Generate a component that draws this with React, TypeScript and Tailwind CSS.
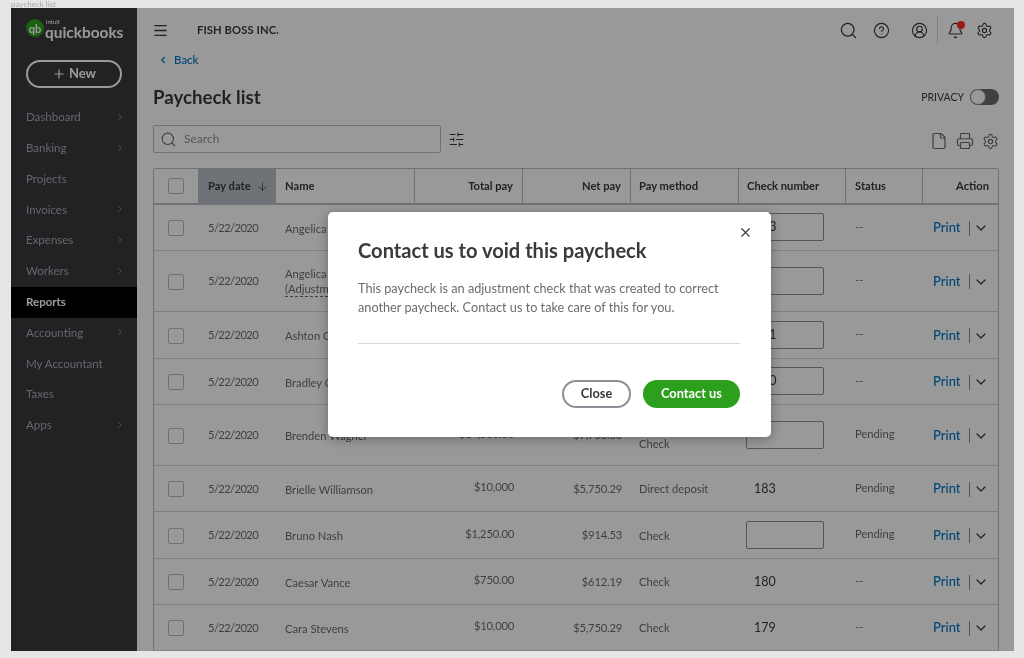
import {
  ArrowDown,
  Bell,
  ChevronDown,
  ChevronLeft,
  ChevronRight,
  CircleHelp,
  CircleUserRound,
  File,
  Menu,
  Plus,
  Printer,
  Search,
  Settings,
  SlidersHorizontal,
  X,
} from "lucide-react";

const navItems = [
  { label: "Dashboard", arrow: true },
  { label: "Banking", arrow: true },
  { label: "Projects", arrow: false },
  { label: "Invoices", arrow: true },
  { label: "Expenses", arrow: true },
  { label: "Workers", arrow: true },
  { label: "Reports", arrow: false, active: true },
  { label: "Accounting", arrow: true },
  { label: "My Accountant", arrow: false },
  { label: "Taxes", arrow: false },
  { label: "Apps", arrow: true },
];

type Paycheck = {
  name: string;
  name2?: string;
  total: string;
  net: string;
  method: string;
  method2?: string;
  check?: string;
  hasInput: boolean;
  status: string;
  height: string;
};

const rows: Paycheck[] = [
  { name: "Angelica Hart", total: "$1,250.00", net: "$914.53", method: "Check", check: "183", hasInput: true, status: "--", height: "h-[46px]" },
  { name: "Angelica Hart", name2: "(Adjustment)", total: "$1,250.00", net: "$914.53", method: "Check", hasInput: true, status: "--", height: "h-[61px]" },
  { name: "Ashton Cole", total: "$750.00", net: "$612.19", method: "Check", check: "181", hasInput: true, status: "--", height: "h-[47px]" },
  { name: "Bradley Carter", total: "$750.00", net: "$612.19", method: "Check", check: "180", hasInput: true, status: "--", height: "h-[46px]" },
  { name: "Brenden Wagner", total: "$14,500.00", net: "$7,750.50", method: "Paper", method2: "Check", hasInput: true, status: "Pending", height: "h-[61px]" },
  { name: "Brielle Williamson", total: "$10,000", net: "$5,750.29", method: "Direct deposit", check: "183", hasInput: false, status: "Pending", height: "h-[46px]" },
  { name: "Bruno Nash", total: "$1,250.00", net: "$914.53", method: "Check", hasInput: true, status: "Pending", height: "h-[47px]" },
  { name: "Caesar Vance", total: "$750.00", net: "$612.19", method: "Check", check: "180", hasInput: false, status: "--", height: "h-[46px]" },
  { name: "Cara Stevens", total: "$10,000", net: "$5,750.29", method: "Check", check: "179", hasInput: false, status: "--", height: "h-[46px]" },
];

const gridCols = "grid grid-cols-[44px_78px_139px_108px_108px_108px_107px_77px_75px]";

const Checkbox = () => (
  <div className="h-[16px] w-[16px] rounded-[2px] border-[1.5px] border-[#babec5] bg-white" />
);

const Sidebar = () => (
  <aside className="flex w-[126px] shrink-0 flex-col bg-[#393a3d]">
    <div className="flex h-[40px] items-start pl-[15px] pt-[11px]">
      <div className="flex h-[18px] w-[18px] items-center justify-center rounded-full bg-[#2ca01c] text-[11px] font-bold leading-none text-white">
        qb
      </div>
      <div className="ml-[1px] flex flex-col">
        <span className="pl-[1px] text-[6px] leading-[6px] text-white">intuit</span>
        <span className="-mt-[1px] text-[15.4px] font-bold leading-[17px] text-white">quickbooks</span>
      </div>
    </div>
    <div className="mt-[12px] px-[15px]">
      <div className="flex h-[28px] w-[96px] items-center justify-center gap-[3px] rounded-full border-2 border-white text-[13px] font-bold text-white">
        <Plus size={14} strokeWidth={2} />
        New
      </div>
    </div>
    <nav className="mt-[14px] flex flex-col">
      {navItems.map((item) => (
        <div
          key={item.label}
          className={
            item.active
              ? "flex h-[30.8px] items-center bg-black pb-[1px] pl-[15px] text-[11.5px] font-bold text-white"
              : "flex h-[30.8px] items-center justify-between pb-[1px] pl-[15px] pr-[12px] text-[11.5px] text-[#a8abb0]"
          }
        >
          {item.label}
          {item.arrow && <ChevronRight size={10} className="text-[#8d9096]" />}
        </div>
      ))}
    </nav>
  </aside>
);

const TopBar = () => (
  <header className="flex h-[44px] items-center text-[#393a3d]">
    <Menu size={17} strokeWidth={1.8} className="-ml-[1px]" />
    <span className="ml-[28px] text-[11.2px] font-bold tracking-[0.1px]">FISH BOSS INC.</span>
    <div className="ml-auto flex items-center pr-[6px]">
      <Search size={19} strokeWidth={1.6} />
      <CircleHelp size={17} strokeWidth={1.6} className="ml-[15px]" />
      <CircleUserRound size={17} strokeWidth={1.6} className="ml-[21px]" />
      <div className="ml-[9px] h-[28px] w-px bg-[#d4d7dc]" />
      <div className="relative ml-[9px]">
        <Bell size={17} strokeWidth={1.6} />
        <span className="absolute -right-[1px] -top-[1px] h-[8px] w-[8px] rounded-full bg-[#ff2a2a]" />
      </div>
      <Settings size={17} strokeWidth={1.6} className="ml-[12px]" />
    </div>
  </header>
);

const TableHead = () => (
  <div className={`${gridCols} h-[36px] rounded-t-[3px] border-b-2 border-[#babec5] text-[11.2px] font-bold text-[#393a3d]`}>
    <div className="flex items-center justify-center">
      <Checkbox />
    </div>
    <div className="flex items-center gap-[5px] bg-[#babec5] pl-[10px]">
      Pay date
      <ArrowDown size={13} strokeWidth={1.4} />
    </div>
    <div className="flex items-center border-r border-[#babec5] pl-[9px]">Name</div>
    <div className="flex items-center justify-end border-r border-[#babec5] pr-[9px]">Total pay</div>
    <div className="flex items-center justify-end border-r border-[#babec5] pr-[9px]">Net pay</div>
    <div className="flex items-center border-r border-[#babec5] pl-[8px]">Pay method</div>
    <div className="flex items-center border-r border-[#babec5] pl-[8px]">Check number</div>
    <div className="flex items-center border-r border-[#babec5] pl-[9px]">Status</div>
    <div className="flex items-center justify-end pr-[9px]">Action</div>
  </div>
);

const TableRow = ({ row }: { row: Paycheck }) => (
  <div className={`${gridCols} ${row.height} border-b border-[#d4d7dc] pt-[1px] text-[11.2px] text-[#6b6c72]`}>
    <div className="flex items-center justify-center">
      <Checkbox />
    </div>
    <div className="flex items-center pl-[10px] tracking-[-0.6px]">5/22/2020</div>
    <div className="flex flex-col justify-center pl-[9px] leading-[15px]">
      <span>{row.name}</span>
      {row.name2 && <span className="w-fit border-b border-dashed border-[#6b6c72]">{row.name2}</span>}
    </div>
    <div className="flex items-center justify-end pb-[3px] pr-[9px] tracking-[-0.2px]">{row.total}</div>
    <div className="flex items-center justify-end pr-[9px] tracking-[-0.2px]">{row.net}</div>
    <div className="flex flex-col justify-center pl-[8px] leading-[16px]">
      <span>{row.method}</span>
      {row.method2 && <span>{row.method2}</span>}
    </div>
    <div className="flex items-center pl-[7px]">
      {row.hasInput ? (
        <div className="mb-[2px] flex h-[28px] w-[78px] items-center rounded-[2px] border-[1.5px] border-[#8d9096] pl-[7px] text-[13px] text-[#393a3d]">
          {row.check}
        </div>
      ) : (
        <span className="pl-[8px] text-[12.5px] text-[#393a3d]">{row.check}</span>
      )}
    </div>
    <div className="flex items-center pb-[2px] pl-[9px]">{row.status}</div>
    <div className="flex items-center pl-[10px]">
      <span className="text-[13px] font-medium text-[#0077c5]">Print</span>
      <div className="ml-[8px] h-[15px] w-[1.5px] bg-[#8d9096]" />
      <ChevronDown size={16} strokeWidth={1.8} className="ml-[3px] text-[#393a3d]" />
    </div>
  </div>
);

const Main = () => (
  <main className="min-w-0 flex-1 bg-white pl-[16px] pr-[15px]">
    <TopBar />
    <div className="flex items-center pl-[5px] text-[11.5px] font-medium text-[#0077c5]">
      <ChevronLeft size={10} strokeWidth={3} />
      <span className="ml-[6px] leading-[16px]">Back</span>
    </div>
    <div className="mt-[16px] flex h-[26px] items-center justify-between">
      <h1 className="text-[18.7px] font-bold text-[#393a3d]">Paycheck list</h1>
      <div className="flex items-center gap-[6px]">
        <span className="pt-[1px] text-[10.5px] text-[#393a3d]">PRIVACY</span>
        <div className="flex h-[16px] w-[29px] justify-start rounded-full bg-[#6b6c72]">
          <div className="h-[16px] w-[16px] rounded-full border border-[#8d9096] bg-white" />
        </div>
      </div>
    </div>
    <div className="mt-[15px] flex h-[28px] items-center">
      <div className="flex h-[28px] w-[288px] items-center rounded-[2px] border border-[#babec5] pl-[6px] text-[12px] text-[#8d9096]">
        <Search size={17} strokeWidth={1.6} className="text-[#6b6c72]" />
        <span className="ml-[7px]">Search</span>
      </div>
      <SlidersHorizontal size={17} strokeWidth={1.5} className="ml-[7px] text-[#393a3d]" />
      <div className="ml-auto flex items-center gap-[8px] pt-[4px] text-[#6b6c72]">
        <File size={18} strokeWidth={1.6} />
        <Printer size={18} strokeWidth={1.6} />
        <Settings size={17} strokeWidth={1.6} />
      </div>
    </div>
    <div className="mt-[15px] rounded-t-[3px] border-x border-t border-[#babec5]">
      <TableHead />
      {rows.map((row, i) => (
        <TableRow key={i} row={row} />
      ))}
    </div>
  </main>
);

const Modal = () => (
  <div className="absolute left-[317px] top-[204px] z-20 h-[225px] w-[443px] rounded-[5px] bg-white px-[30px] pt-[26px] shadow-[0_2px_12px_rgba(0,0,0,0.3)]">
    <X size={15} strokeWidth={1.8} className="absolute right-[18px] top-[13px] text-[#393a3d]" />
    <h2 className="text-[20.1px] font-bold leading-[24px] text-[#393a3d]">Contact us to void this paycheck</h2>
    <p className="mt-[17px] text-[12.7px] leading-[19px] text-[#6b6c72]">
      This paycheck is an adjustment check that was created to correct
      <br />
      another paycheck. Contact us to take care of this for you.
    </p>
    <div className="mt-[26px] h-px w-[382px] bg-[#d4d7dc]" />
    <div className="mt-[36px] flex w-[382px] justify-end gap-[12px] text-[12.8px] font-bold">
      <button className="h-[28px] w-[69px] rounded-full border-2 border-[#8d9096] text-[#393a3d]">Close</button>
      <button className="h-[28px] w-[97px] rounded-full bg-[#2ca01c] text-white">Contact us</button>
    </div>
  </div>
);

export default function App() {
  return (
    <div className="h-[658px] w-[1024px] overflow-hidden bg-[#e6e6e6] pl-[11px] font-['Lato',sans-serif] blur-[0.35px]">
      <div className="h-[8px] text-[8px] leading-[8px] text-[#a9a9a9]">paycheck list</div>
      <div className="relative flex h-[643px] w-[1003px] overflow-hidden">
        <Sidebar />
        <Main />
        <div className="absolute inset-0 z-10 bg-black/40" />
        <Modal />
      </div>
    </div>
  );
}
